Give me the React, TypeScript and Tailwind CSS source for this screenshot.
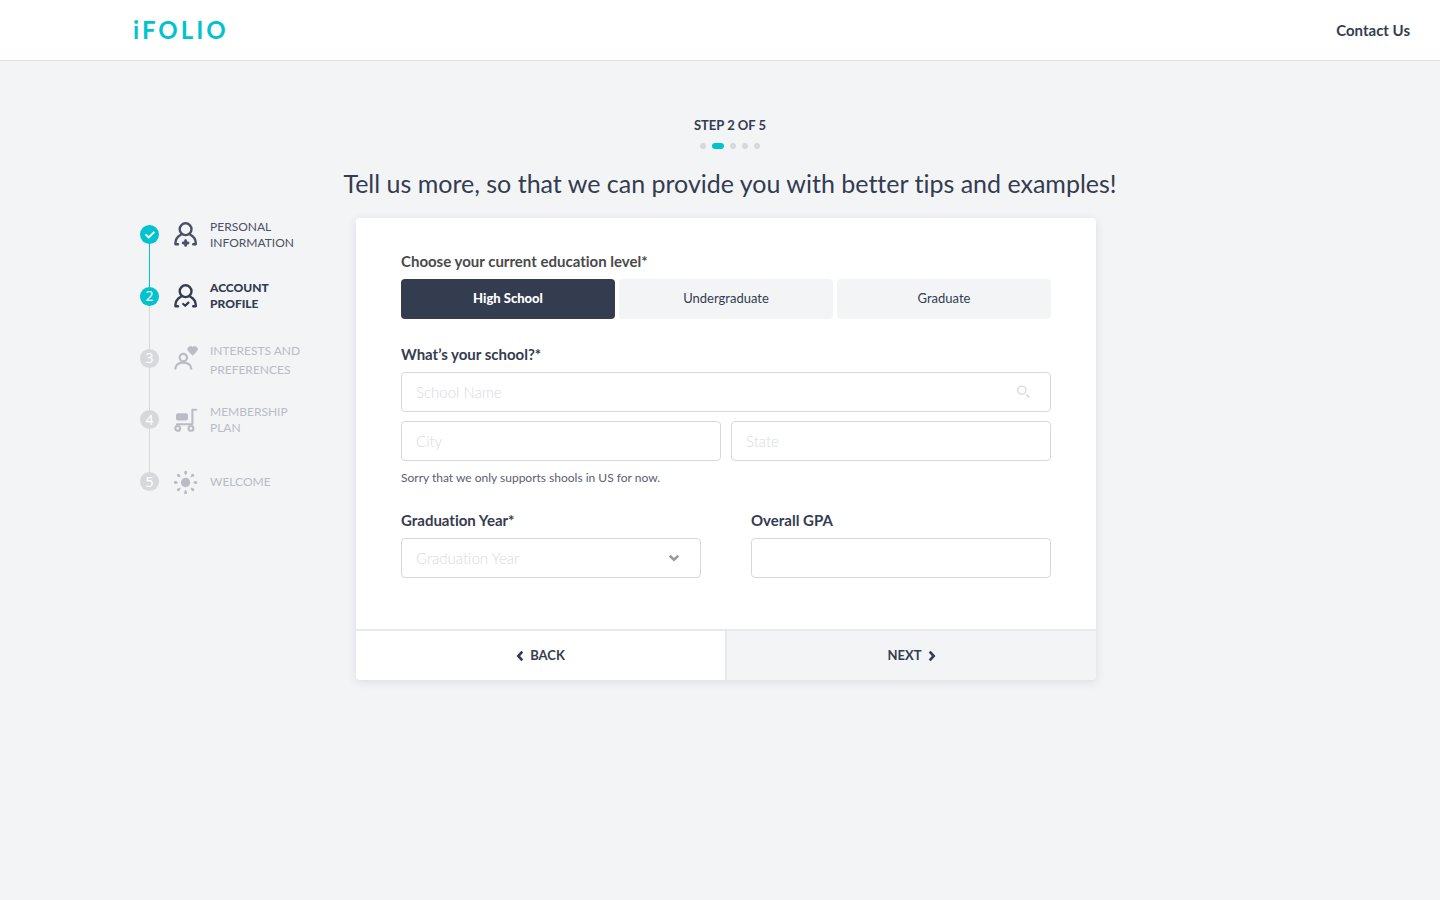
import { FaCheck } from "react-icons/fa";

interface StepProps {
  number: number,
  label: string[],
  icon: React.ReactNode,
  status: "done" | "current" | "todo",
  leading?: string
}

const Person: React.FC<{ viewBox?: string, children: React.ReactNode }> = ({ viewBox = "0 0 24 26", children }) => (
  <svg viewBox={viewBox} className="w-6 h-[26px]" fill="none" stroke="currentColor" strokeWidth="2.4" strokeLinecap="round" strokeLinejoin="round" aria-hidden="true">
    <circle cx="11.6" cy="8.2" r="5.9" />
    <path d="M4 23.2H1.4C1.2 19 3 15.8 6.8 13.8M19.2 23.2h2.6c.2-4.2-1.6-7.4-5.4-9.4" />
    {children}
  </svg>
);

const HeartPersonIcon = () => (
  <svg viewBox="0 0 24 24" className="w-6 h-6" fill="none" stroke="currentColor" strokeWidth="2.2" strokeLinecap="round" aria-hidden="true">
    <circle cx="9.3" cy="11.6" r="3.7" />
    <path d="M1.3 22.6c.6-3.8 3.8-5.9 8-5.9s7.4 2.1 8 5.9" />
    <path d="M18.6 9.2l-4-3.9a2.8 2.8 0 0 1 4-4.1 2.8 2.8 0 0 1 4 4.1z" fill="currentColor" stroke="currentColor" strokeWidth=".6" />
  </svg>
);

const CartIcon = () => (
  <svg viewBox="0 0 24 24" className="w-6 h-6" fill="none" stroke="currentColor" strokeWidth="2.1" strokeLinecap="round" strokeLinejoin="round" aria-hidden="true">
    <rect x="2" y="5.2" width="12" height="7.2" rx="2" fill="currentColor" stroke="none" />
    <path d="M3 16.2h15.4V1.8h3.8" />
    <circle cx="3.7" cy="20.4" r="2.4" />
    <circle cx="17" cy="20.4" r="2.4" />
  </svg>
);

const SunIcon = () => (
  <svg viewBox="0 0 24 24" className="w-6 h-6" fill="currentColor" aria-hidden="true">
    <circle cx="11.6" cy="12.5" r="4.7" />
    {[0, 45, 90, 135, 180, 225, 270, 315].map((angle) => (
      <path key={angle} d="M11.6 5.2c-.9-1-1.5-2-1.5-2.9a1.5 1.5 0 0 1 3 0c0 .9-.6 1.9-1.5 2.9z" transform={`rotate(${angle} 11.6 12.5)`} />
    ))}
  </svg>
);

const steps: StepProps[] = [
  { number: 1, label: ["PERSONAL", "INFORMATION"], status: "done", icon: <Person viewBox="0 1 24 26"><path d="M11.6 19.6v4.8M9.2 22H14" strokeWidth="2.8" /></Person> },
  { number: 2, label: ["ACCOUNT", "PROFILE"], status: "current", icon: <Person><path d="M9.2 21l2 1.8 3.2-3.2" strokeWidth="2.2" /></Person> },
  { number: 3, label: ["INTERESTS AND", "PREFERENCES"], status: "todo", icon: <HeartPersonIcon />, leading: "leading-[19px] pt-1" },
  { number: 4, label: ["MEMBERSHIP", "PLAN"], status: "todo", icon: <CartIcon /> },
  { number: 5, label: ["WELCOME"], status: "todo", icon: <SunIcon /> },
];

const textColor = {
  done: "text-[#4a5164]",
  current: "text-[#343c50] font-black",
  todo: "text-[#b9bcc5]",
};

const Step: React.FC<StepProps> = ({ number, label, icon, status, leading = "leading-4" }) => {
  return (
    <li className="flex flex-1 last:flex-none" aria-current={status === "current" ? "step" : undefined}>
      <div className="flex flex-col items-center">
        <span className={`flex items-center justify-center w-[19px] h-[19px] rounded-full text-sm font-normal text-white font-['Noto_Sans',sans-serif] ${status === "todo" ? "bg-[#d7d8dc]" : "bg-[#00c3cd]"}`}>
          {status === "done" ? <FaCheck size={10} /> : number}
        </span>
        {number < steps.length && <span className={`flex-1 w-px ${status === "done" ? "bg-[#00c3cd]" : "bg-[#d7d8dc]"}`} />}
      </div>
      <div className={`flex items-center h-[19px] ml-[15px] gap-3 ${textColor[status]}`}>
        {icon}
        <p className={`text-xs whitespace-nowrap ${leading}`}>
          {label.map((line) => <span key={line} className="block">{line}</span>)}
        </p>
      </div>
    </li>
  );
};

const levels = ["High School", "Undergraduate", "Graduate"];

const inputStyle = "w-full h-10 px-[14px] bg-white border border-[#d7d8dc] rounded-[4px] text-[15px] placeholder:text-[#d9dade] placeholder:font-light outline-none focus:border-[#00c3cd]";
const labelStyle = "block text-[15px] leading-5 font-bold mb-2";

const App = () => {
  return (
    <div className="min-h-screen bg-[#f3f4f6] text-[#343c50] font-[Lato,sans-serif] [font-variant-ligatures:none]">
      <header className="flex items-center justify-between h-[61px] pl-[133px] pr-[30px] bg-white border-b border-[#dfe0e3]">
        <a href="#" className="text-2xl font-bold tracking-[3px] text-[#00c3cd]">iFOLIO</a>
        <a href="#" className="text-[15px] font-bold">Contact Us</a>
      </header>

      <main className="pt-[54px] pb-10">
        <div className="flex flex-col items-center pl-5">
          <p className="text-[13px] leading-5 font-bold">STEP 2 OF 5</p>
          <div className="flex gap-1.5 mt-2">
            {steps.map((step) => (
              <span key={step.number} className={`h-1.5 rounded-full ${step.status === "current" ? "w-3 bg-[#00c3cd]" : "w-1.5 bg-[#d7d8dc]"}`} />
            ))}
          </div>
          <h1 className="mt-[18px] text-[25px] leading-8">Tell us more, so that we can provide you with better tips and examples!</h1>
        </div>

        <div className="flex items-start mt-[19px] px-[140px]">
          <ol className="flex flex-col shrink-0 w-[216px] h-[266px] mt-[7px]">
            {steps.map((step) => <Step key={step.number} {...step} />)}
          </ol>

          <form className="flex-1 max-w-[740px] bg-white rounded-[4px] shadow-[0_2px_10px_rgba(52,60,80,0.12)] overflow-hidden">
            <div className="px-[45px] pt-[33px] pb-[51px]">
              <p id="level" className={`${labelStyle} text-[#4a4a4a]`}>Choose your current education level*</p>
              <div role="group" aria-labelledby="level" className="grid grid-cols-3 gap-1">
                {levels.map((level, i) => (
                  <button key={level} type="button" aria-pressed={i === 0} className={`h-10 rounded-[4px] text-[13px] ${i === 0 ? "bg-[#343c50] text-white font-black" : "bg-[#f3f4f6]"}`}>{level}</button>
                ))}
              </div>

              <label htmlFor="school" className={`${labelStyle} mt-[25px]`}>What’s your school?*</label>
              <div className="relative">
                <input id="school" type="text" placeholder="School Name" className={inputStyle} />
                <svg viewBox="0 0 14 14" className="absolute right-5 top-[13px] w-[14px] h-[14px]" fill="none" stroke="#d7d8dc" strokeWidth="1.3" aria-hidden="true">
                  <circle cx="4.8" cy="5.2" r="4.1" />
                  <path d="M9.2 9.6l3 2.8" strokeWidth="1.6" />
                </svg>
              </div>
              <div className="grid grid-cols-2 gap-[10px] mt-[9px]">
                <input type="text" aria-label="City" placeholder="City" className={inputStyle} />
                <input type="text" aria-label="State" placeholder="State" className={inputStyle} />
              </div>
              <p className="mt-[7px] text-xs leading-5 text-[#5a6070]">Sorry that we only supports shools in US for now.</p>

              <div className="grid grid-cols-2 gap-[50px] mt-[22px]">
                <div>
                  <label htmlFor="year" className={labelStyle}>Graduation Year*</label>
                  <div className="relative">
                    <select id="year" defaultValue="" className={`${inputStyle} appearance-none text-[#d9dade] font-light`}>
                      <option value="" disabled>Graduation Year</option>
                    </select>
                    <svg viewBox="0 0 12 8" className="absolute right-[21px] top-4 w-3 h-2 pointer-events-none" fill="none" stroke="#9b9b9b" strokeWidth="2.6" aria-hidden="true">
                      <path d="M1.7 1.7L6 5.8l4.3-4.1" />
                    </svg>
                  </div>
                </div>
                <div>
                  <label htmlFor="gpa" className={labelStyle}>Overall GPA</label>
                  <input id="gpa" type="text" className={inputStyle} />
                </div>
              </div>
            </div>

            <div className="grid grid-cols-2 h-[51px] border-t-2 border-[#e8e9eb] text-[13px] font-bold">
              <button type="button" className="flex items-center justify-center gap-1.5 border-r border-[#e8e9eb]">
                <svg viewBox="0 0 8 12" className="w-2 h-3" fill="none" stroke="currentColor" strokeWidth="2.6" aria-hidden="true">
                  <path d="M6.3 1.7L2.3 6l4 4.3" />
                </svg>
                BACK
              </button>
              <button type="submit" className="flex items-center justify-center gap-1.5 border-l border-[#e8e9eb] bg-[#f3f4f6]">
                NEXT
                <svg viewBox="0 0 8 12" className="w-2 h-3" fill="none" stroke="currentColor" strokeWidth="2.6" aria-hidden="true">
                  <path d="M1.7 1.7l4 4.3-4 4.3" />
                </svg>
              </button>
            </div>
          </form>
        </div>
      </main>
    </div>
  );
};

export default App;
